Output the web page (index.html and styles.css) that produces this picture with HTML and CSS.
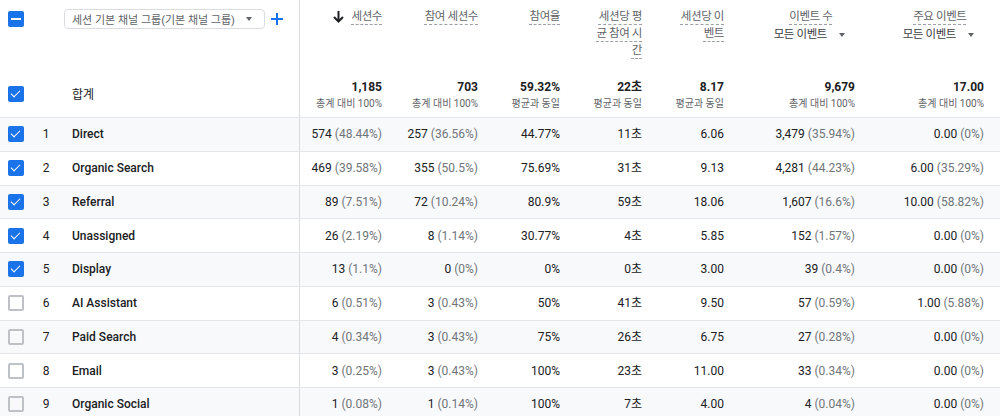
FILE: index.html
```html
<!DOCTYPE html>
<html lang="ko">
<head>
<meta charset="utf-8">
<link rel="stylesheet" href="styles.css">
</head>
<body>
<div class="report">
  <div class="row head">
    <div class="cell dim">
      <div class="dim-top">
        <span class="cb ind"></span>
        <div class="select">세션 기본 채널 그룹(기본 채널 그룹)<span class="caret"></span></div>
        <svg class="plus" width="12" height="12" viewBox="0 0 12 12"><path d="M6 0v12M0 6h12" stroke="#1a73e8" stroke-width="2"/></svg>
      </div>
      <div class="dim-bottom">
        <span class="cb on"></span>
        <span class="total-label">합계</span>
      </div>
    </div>
    <div class="cell metric">
      <div class="label"><svg class="sort" width="11" height="12" viewBox="0 0 11 12"><path d="M5.5 0v10M1 6l4.5 4.5L10 6" fill="none" stroke="#202124" stroke-width="2"/></svg><span class="ul">세션수</span></div>
      <div class="total"><b>1,185</b><small>총계 대비 100%</small></div>
    </div>
    <div class="cell metric">
      <div class="label"><span class="ul">참여 세션수</span></div>
      <div class="total"><b>703</b><small>총계 대비 100%</small></div>
    </div>
    <div class="cell metric">
      <div class="label"><span class="ul">참여율</span></div>
      <div class="total"><b>59.32%</b><small>평균과 동일</small></div>
    </div>
    <div class="cell metric">
      <div class="label narrow"><span class="ul">세션당 평균 참여 시간</span></div>
      <div class="total"><b>22초</b><small>평균과 동일</small></div>
    </div>
    <div class="cell metric">
      <div class="label narrow"><span class="ul">세션당 이벤트</span></div>
      <div class="total"><b>8.17</b><small>평균과 동일</small></div>
    </div>
    <div class="cell metric">
      <div class="label picker"><span class="ul">이벤트 수</span><span class="evsel">모든 이벤트<span class="caret"></span></span></div>
      <div class="total"><b>9,679</b><small>총계 대비 100%</small></div>
    </div>
    <div class="cell metric">
      <div class="label picker"><span class="ul">주요 이벤트</span><span class="evsel">모든 이벤트<span class="caret"></span></span></div>
      <div class="total"><b>17.00</b><small>총계 대비 100%</small></div>
    </div>
  </div>

  <div class="row data alt">
    <div class="cell dim"><span class="cb on"></span><span class="num">1</span><span class="name">Direct</span></div>
    <div class="cell">574 <i>(48.44%)</i></div>
    <div class="cell">257 <i>(36.56%)</i></div>
    <div class="cell">44.77%</div>
    <div class="cell">11초</div>
    <div class="cell">6.06</div>
    <div class="cell">3,479 <i>(35.94%)</i></div>
    <div class="cell">0.00 <i>(0%)</i></div>
  </div>
  <div class="row data">
    <div class="cell dim"><span class="cb on"></span><span class="num">2</span><span class="name">Organic Search</span></div>
    <div class="cell">469 <i>(39.58%)</i></div>
    <div class="cell">355 <i>(50.5%)</i></div>
    <div class="cell">75.69%</div>
    <div class="cell">31초</div>
    <div class="cell">9.13</div>
    <div class="cell">4,281 <i>(44.23%)</i></div>
    <div class="cell">6.00 <i>(35.29%)</i></div>
  </div>
  <div class="row data alt">
    <div class="cell dim"><span class="cb on"></span><span class="num">3</span><span class="name">Referral</span></div>
    <div class="cell">89 <i>(7.51%)</i></div>
    <div class="cell">72 <i>(10.24%)</i></div>
    <div class="cell">80.9%</div>
    <div class="cell">59초</div>
    <div class="cell">18.06</div>
    <div class="cell">1,607 <i>(16.6%)</i></div>
    <div class="cell">10.00 <i>(58.82%)</i></div>
  </div>
  <div class="row data">
    <div class="cell dim"><span class="cb on"></span><span class="num">4</span><span class="name">Unassigned</span></div>
    <div class="cell">26 <i>(2.19%)</i></div>
    <div class="cell">8 <i>(1.14%)</i></div>
    <div class="cell">30.77%</div>
    <div class="cell">4초</div>
    <div class="cell">5.85</div>
    <div class="cell">152 <i>(1.57%)</i></div>
    <div class="cell">0.00 <i>(0%)</i></div>
  </div>
  <div class="row data alt">
    <div class="cell dim"><span class="cb on"></span><span class="num">5</span><span class="name">Display</span></div>
    <div class="cell">13 <i>(1.1%)</i></div>
    <div class="cell">0 <i>(0%)</i></div>
    <div class="cell">0%</div>
    <div class="cell">0초</div>
    <div class="cell">3.00</div>
    <div class="cell">39 <i>(0.4%)</i></div>
    <div class="cell">0.00 <i>(0%)</i></div>
  </div>
  <div class="row data">
    <div class="cell dim"><span class="cb"></span><span class="num">6</span><span class="name">AI Assistant</span></div>
    <div class="cell">6 <i>(0.51%)</i></div>
    <div class="cell">3 <i>(0.43%)</i></div>
    <div class="cell">50%</div>
    <div class="cell">41초</div>
    <div class="cell">9.50</div>
    <div class="cell">57 <i>(0.59%)</i></div>
    <div class="cell">1.00 <i>(5.88%)</i></div>
  </div>
  <div class="row data alt">
    <div class="cell dim"><span class="cb"></span><span class="num">7</span><span class="name">Paid Search</span></div>
    <div class="cell">4 <i>(0.34%)</i></div>
    <div class="cell">3 <i>(0.43%)</i></div>
    <div class="cell">75%</div>
    <div class="cell">26초</div>
    <div class="cell">6.75</div>
    <div class="cell">27 <i>(0.28%)</i></div>
    <div class="cell">0.00 <i>(0%)</i></div>
  </div>
  <div class="row data">
    <div class="cell dim"><span class="cb"></span><span class="num">8</span><span class="name">Email</span></div>
    <div class="cell">3 <i>(0.25%)</i></div>
    <div class="cell">3 <i>(0.43%)</i></div>
    <div class="cell">100%</div>
    <div class="cell">23초</div>
    <div class="cell">11.00</div>
    <div class="cell">33 <i>(0.34%)</i></div>
    <div class="cell">0.00 <i>(0%)</i></div>
  </div>
  <div class="row data alt">
    <div class="cell dim"><span class="cb"></span><span class="num">9</span><span class="name">Organic Social</span></div>
    <div class="cell">1 <i>(0.08%)</i></div>
    <div class="cell">1 <i>(0.14%)</i></div>
    <div class="cell">100%</div>
    <div class="cell">7초</div>
    <div class="cell">4.00</div>
    <div class="cell">4 <i>(0.04%)</i></div>
    <div class="cell">0.00 <i>(0%)</i></div>
  </div>
</div>
</body>
</html>
```

FILE: styles.css
```css
html, body {
  margin: 0;
  padding: 0;
  background: #ffffff;
}
body {
  font-family: Roboto, "Noto Sans CJK KR", sans-serif;
  font-size: 12px;
  color: #202124;
  overflow: hidden;
}
.report {
  width: 1000px;
}
.row {
  display: grid;
  grid-template-columns: 300px 98px 96px 82px 82px 82px 131px 129px;
  border-bottom: 1px solid #e3e5e8;
}
.cell {
  box-sizing: border-box;
  padding-right: 16px;
  text-align: right;
}
.cell.dim {
  border-right: 1px solid #dadce0;
  text-align: left;
  padding-right: 0;
}

/* header */
.head {
  height: 118px;
  box-sizing: border-box;
}
.head .dim {
  display: flex;
  flex-direction: column;
  justify-content: space-between;
}
.dim-top {
  display: flex;
  align-items: center;
  padding: 9px 0 0 8px;
}
.select {
  margin-left: 40px;
  height: 20px;
  box-sizing: border-box;
  border: 1px solid #dadce0;
  border-radius: 4px;
  padding: 0 12px 0 7px;
  display: flex;
  align-items: center;
  font-size: 11px;
  color: #5f6368;
  width: 201px;
  white-space: nowrap;
}
.select .caret {
  margin-left: auto;
}
.plus {
  margin-left: 6px;
}
.dim-bottom {
  display: flex;
  align-items: center;
  padding: 0 0 15px 8px;
}
.total-label {
  margin-left: 48px;
  font-size: 12px;
}
.caret {
  display: inline-block;
  width: 0;
  height: 0;
  border-left: 3.5px solid transparent;
  border-right: 3.5px solid transparent;
  border-top: 4px solid #5f6368;
}
.metric {
  display: flex;
  flex-direction: column;
  justify-content: space-between;
  align-items: flex-end;
}
.label {
  padding-top: 8px;
  line-height: 17px;
  font-size: 11.5px;
  letter-spacing: -0.4px;
  color: #5f6368;
  text-align: right;
  display: flex;
  align-items: flex-start;
  justify-content: flex-end;
}
.label.narrow {
  max-width: 50px;
}
.ul {
  text-decoration: underline dashed #9aa0a6;
  text-decoration-thickness: 1px;
  text-underline-offset: 4px;
}
.sort {
  margin: 3px 7px 0 0;
}
.label.picker {
  flex-direction: column;
  align-items: center;
}
.evsel {
  display: flex;
  align-items: center;
  padding: 1px 10px 0 7px;
  gap: 12px;
  color: #3c4043;
}
.total {
  display: flex;
  flex-direction: column;
  align-items: flex-end;
  padding-bottom: 5px;
}
.total b {
  font-weight: 700;
  font-size: 12px;
  line-height: 18px;
}
.total small {
  font-size: 10px;
  line-height: 16px;
  color: #5f6368;
}

/* data rows */
.data {
  height: 33.75px;
  box-sizing: border-box;
  align-items: center;
  line-height: 16px;
}
.data.alt {
  background: #f8f9fa;
}
.data .cell {
  white-space: nowrap;
}
.data .dim {
  display: flex;
  align-items: center;
  height: 100%;
  padding-left: 8px;
}
.data i {
  font-style: normal;
  color: #70757a;
}
.num {
  width: 24px;
  margin-left: 10px;
  text-align: center;
}
.name {
  margin-left: 14px;
  font-weight: 500;
}

/* checkboxes */
.cb {
  display: inline-block;
  width: 16px;
  height: 16px;
  box-sizing: border-box;
  border: 2px solid #bdc1c6;
  border-radius: 2px;
  position: relative;
  flex: none;
}
.cb.on, .cb.ind {
  background: #1a73e8;
  border-color: #1a73e8;
}
.cb.on::after {
  content: "";
  position: absolute;
  left: 3px;
  top: 0px;
  width: 4px;
  height: 8px;
  border-right: 1.6px solid #fff;
  border-bottom: 1.6px solid #fff;
  transform: rotate(45deg);
}
.cb.ind::after {
  content: "";
  position: absolute;
  left: 1px;
  right: 1px;
  top: 5px;
  height: 2px;
  background: #fff;
}
```
